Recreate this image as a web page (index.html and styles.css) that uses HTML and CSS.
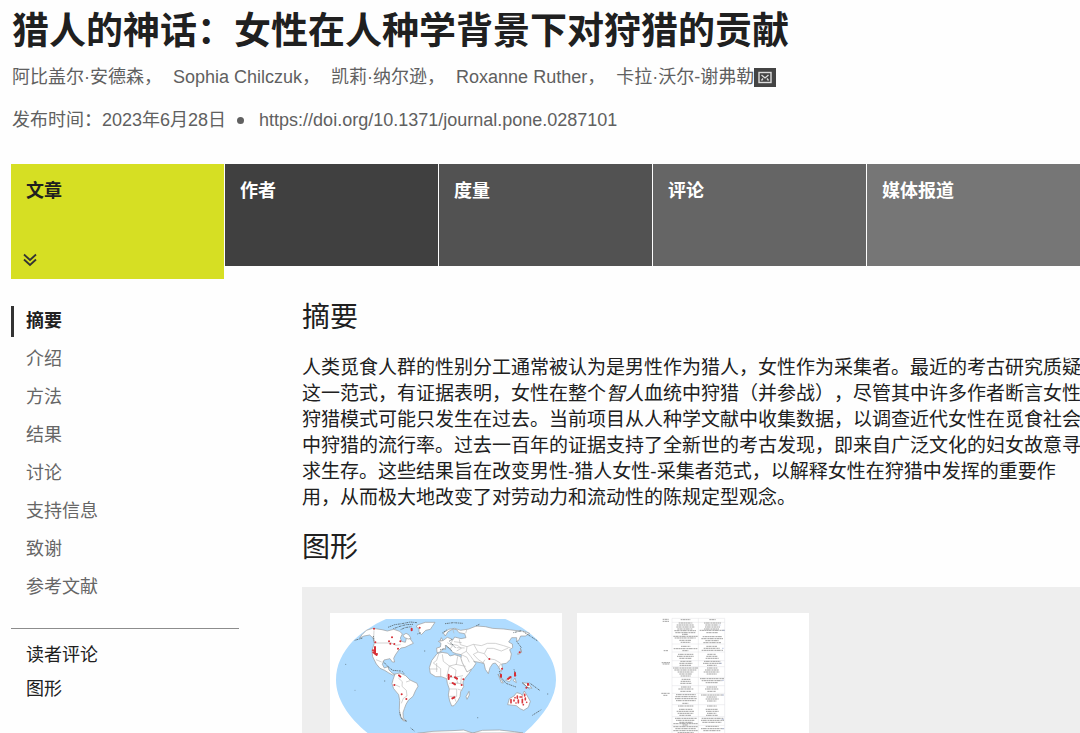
FILE: index.html
```html
<!DOCTYPE html>
<html lang="zh-CN">
<head>
<meta charset="utf-8">
<meta name="viewport" content="width=device-width, initial-scale=1">
<title>猎人的神话：女性在人种学背景下对狩猎的贡献</title>
<link rel="stylesheet" href="styles.css">
</head>
<body>
<header class="article-header">
  <h1 class="article-title">猎人的神话：女性在人种学背景下对狩猎的贡献</h1>
  <ul class="authors">
    <li>阿比盖尔·安德森，</li>
    <li>Sophia Chilczuk，</li>
    <li>凯莉·纳尔逊，</li>
    <li>Roxanne Ruther，</li>
    <li class="corresponding">卡拉·沃尔-谢弗勒<svg class="mail" viewBox="0 0 22 19" aria-hidden="true"><rect width="22" height="19" fill="#444"/><rect x="5" y="4.500" width="12" height="10" fill="none" stroke="#ddd" stroke-width="1.400"/><path d="M7.500 7 11 10 14.500 7M7.500 12.500 9 10.500M14.500 12.500 13 10.500" fill="none" stroke="#ddd" stroke-width="1.300"/></svg></li>
  </ul>
  <p class="published"><span>发布时间：2023年6月28日</span><span class="dot"></span><a href="#doi">https://doi.org/10.1371/journal.pone.0287101</a></p>
</header>

<nav class="tabs">
  <a class="tab tab-active" href="#article">文章
    <svg class="chevrons" viewBox="0 0 14 14" aria-hidden="true"><path d="M1 1.500 7 7 13 1.500M1 6.500 7 12 13 6.500" fill="none" stroke="#333" stroke-width="1.800"/></svg>
  </a>
  <a class="tab tab-authors" href="#authors">作者</a>
  <a class="tab tab-metrics" href="#metrics">度量</a>
  <a class="tab tab-comments" href="#comments">评论</a>
  <a class="tab tab-media" href="#media">媒体报道</a>
</nav>

<div class="layout">
  <aside class="sidebar">
    <nav class="sections">
      <a class="current" href="#abstract">摘要</a>
      <a href="#intro">介绍</a>
      <a href="#methods">方法</a>
      <a href="#results">结果</a>
      <a href="#discussion">讨论</a>
      <a href="#supporting">支持信息</a>
      <a href="#thanks">致谢</a>
      <a href="#references">参考文献</a>
    </nav>
    <nav class="extras">
      <a href="#reader-comments">读者评论</a>
      <a href="#figures">图形</a>
    </nav>
  </aside>

  <main class="content">
    <h2 id="abstract">摘要</h2>
    <p class="abstract">人类觅食人群的性别分工通常被认为是男性作为猎人，女性作为采集者。最近的考古研究质疑这一范式，有证据表明，女性在整个<em>智人</em>血统中狩猎（并参战），尽管其中许多作者断言女性狩猎模式可能只发生在过去。当前项目从人种学文献中收集数据，以调查近代女性在觅食社会中狩猎的流行率。过去一百年的证据支持了全新世的考古发现，即来自广泛文化的妇女故意寻求生存。这些结果旨在改变男性-猎人女性-采集者范式，以解释女性在狩猎中发挥的重要作用，从而极大地改变了对劳动力和流动性的陈规定型观念。</p>
    <h2 id="figures">图形</h2>
    <div class="figures">
      <a class="figure" href="#fig1">
        <svg viewBox="90 99 696 360" role="img" aria-label="世界地图">
          <path fill="#b0dcff" d="M258 117H616C655 134 700 160 730 200C756 233 768 264 768 300C768 350 735 405 672 460H204C145 412 108 357 108 300C108 255 127 218 158 184C185 157 220 134 258 117Z"/>
          <g fill="#fff" stroke="#999" stroke-width="2" stroke-linejoin="round">
            <path d="M186 164 199 151 218 145 246 149 262 153 281 148 299 154 307 162 301 174 305 184 316 187 320 172 331 177 340 190 325 197 315 202 303 204 294 213 286 225 281 235 284 246 277 246 270 236 252 240 247 253 253 264 264 260 267 270 276 279 285 283 278 285 265 278 254 271 240 265 229 252 218 230 216 211 223 190 219 174 209 165 192 168 179 174Z"/>
            <path d="M352 135 376 127 405 127 397 139 391 148 377 151 364 164 357 156 357 146 349 141Z"/>
            <path d="M309 166 318 160 326 164 333 175 325 177 314 173Z"/>
            <path d="M285 282 300 279 317 287 330 300 351 310 354 319 346 333 339 349 325 361 318 373 313 386 309 398 310 414 319 423 309 422 301 409 298 389 299 361 296 344 281 326 276 311 279 299Z"/>
            <path d="M411 221 426 217 443 220 450 228 464 224 480 229 489 239 493 252 502 267 514 269 507 280 495 295 489 306 491 320 482 335 480 350 473 363 462 377 455 378 449 363 445 345 448 327 442 310 440 296 424 290 407 290 391 280 388 263 395 242Z"/>
            <path d="M411 218 410 204 421 201 423 190 415 184 430 181 442 172 459 179 464 171 483 176 498 173 494 161 477 158 470 149 459 147 444 155 436 168 430 159 446 148 464 145 482 151 506 147 529 138 556 140 577 145 611 147 642 151 673 154 689 160 676 168 662 168 656 181 650 184 650 173 635 173 626 186 637 192 638 203 629 209 634 222 631 238 619 250 605 252 608 265 603 275 596 261 586 249 578 251 570 263 565 281 556 268 552 250 542 248 527 245 521 244 528 250 518 265 501 276 487 248 483 236 484 224 469 221 458 217 452 208 446 203 436 196 437 208 431 206 426 212 417 217Z"/>
            <path d="M623 374 628 356 642 348 650 338 662 341 667 347 673 333 682 348 691 364 685 382 671 391 660 386 649 377Z"/>
            <path d="M507 334 508 345 501 358 498 350ZM420 182 424 173 429 182ZM617 301 629 288 634 297 628 305ZM640 302 645 294 649 308ZM667 308 684 310 696 325 683 322ZM652 222 664 215 661 204 665 217 656 223ZM594 282 610 309 604 308Z"/>
            <path d="M352 460 399 454 456 452 491 450 518 459 547 451 598 450 643 455 669 459Z"/>
          </g>
          <g fill="none" stroke="#b5b5b5" stroke-width="1.800">
            <path d="M222 151 221 178M224 189H275L287 196 302 194M228 239 245 246M295 294 307 305 306 319 319 331 321 348 310 355 304 370M283 313 300 321M330 302 318 306"/>
            <path d="M416 222 410 241 400 249M427 223 430 244 448 258 469 253 473 229M400 249 422 266 422 289M410 249V276M448 258 440 290M448 258 468 270 466 291 489 287M467 253 497 259M443 293 466 291 474 309 447 310M449 327H470V349H448M470 309 490 313M473 327 487 332M390 267H413M462 349 468 365M484 292 482 312"/>
            <path d="M459 179 451 192 472 196 484 205 470 213M442 188 458 197 450 207M478 178 481 194 501 200 499 214 484 222M501 200 520 193 544 197 562 190 586 190 611 197 632 204M521 193 534 216 553 221 565 236 584 239 601 249M534 216 520 223 535 239 552 250M553 221 561 205 580 205 604 213 625 204M499 214 512 229 523 244M501 147 497 160M603 250 594 266M547 251 555 239M458 147 462 160M484 224 501 232 508 247M462 185 485 188M470 203 494 204"/>
          </g>
          <g fill="none" stroke="#59666c" stroke-width="2.500" stroke-dasharray="3 2 6 2">
            <path d="M264 142 284 134 306 131 331 126 351 128M280 146 300 139 318 134 339 133M302 149 315 143 334 140M435 131 460 128 489 130M528 138 540 132M220 168 223 187M250 245 263 259 278 271 302 273M299 397 304 415 320 424M352 162 363 158M427 159 441 149M420 210 433 206M438 196 454 212M452 188 466 203M598 273 604 293 618 310 648 321M642 268 648 287M666 308 688 327M164 181 188 174M650 184 664 203M689 309 719 331M640 158 665 152M697 406 724 389M447 184 457 178M307 274 312 281M670 155 713 183M332 444 343 453"/>
          </g>
          <g fill="none" stroke="#d62e35" stroke-width="6" stroke-linecap="round">
            <path d="M222 146h.1M335 146v5M359 143h.1M276 172h.1M267 184h.1M271 191h.1M283 192h.1M301 184h.1M294 206h.1M226 187h.1M225 201v20M219 211h.1M231 222h.1M220 217 230 225M297 286 301 290M283 315h.1M305 343h.1M319 357h.1M446 284V297M453 289h.1M465 292 471 296M490 298h.1M485 315h.1M458 309 465 313M457 355 463 352M568 237h.1M659 217h.1M606 266h.1M603 284v6M624 297 632 291M645 279v8M684 311v4M679 323h.1"/>
          </g>
          <g fill="none" stroke="#d83b40" stroke-width="5" stroke-linecap="round">
            <path d="M633 359v9M642 360v3M648 369h.1M652 348v7M660 351h6M655 360v8M667 358v10M674 343v5M676 354v5M680 367h.1M670 374h.1M645 353h.1"/>
          </g>
          <g fill="#7997aa"><circle cx="137" cy="253" r="2"/><circle cx="254" cy="303" r="2"/><circle cx="533" cy="413" r="2"/><circle cx="743" cy="342" r="2"/><circle cx="374" cy="213" r="2"/><circle cx="165" cy="331" r="1.500"/></g>
        </svg>
      </a>
      <a class="figure" href="#fig2">
        <svg viewBox="21 99 696 360" role="img" aria-label="数据表">
          <g fill="none" stroke="#e1e1e5" stroke-width="1.500"><path d="M306 115V460M385 115V460M464 115V460M306 115H464M306 127H464M306 192H464M306 216H464M306 242H464M306 260H464M306 292H464M306 317H464M306 340H464M306 374H464M306 410H464M306 436H464"/></g>
          <g fill="none" stroke="#a5a5a5" stroke-width="3" stroke-dasharray="5 1 9 1 3 1">
            <path d="M278 118H296M278 124H298M281 212H294M275 248H300M278 252H299M274 340H300M280 346H292"/>
            <path d="M332 119H361M326 129H367M320 135H371M319 141H373M322 147H367M313 152H378M316 158H377M336 163H354M310 169H383M314 174H377M328 181H364M332 187H361M333 199H361M311 206H382M337 212H355M324 223H371M321 229H371M328 235H365M331 244H364M328 250H367M329 256H363M309 264H384M313 270H380M323 276H370M328 282H366M332 288H362M335 298H362M332 304H362M331 310H364M333 321H363M325 327H371M331 334H363M318 344H377M316 350H379M315 356H380M318 362H377M337 370H355M324 378H371M327 388H368M320 394H372M323 400H370M328 406H364M315 415H380M318 421H373M328 427H369M310 431H383M338 435H353M310 440H383M316 446H378M310 452H383M323 458H371"/>
            <path d="M418 119H437M402 129H453M406 135H445M405 141H450M402 147H447M389 151H465M409 158H443M398 170H456M394 176H459M406 182H447M400 188H453M409 199H441M401 205H449M395 211H459M412 223H438M409 229H442M407 235H447M402 244H451M399 250H455M411 256H440M411 264H442M405 270H447M401 276H448M410 282H440M390 296H462M395 302H457M407 308H444M410 321H441M405 327H446M412 334H438M393 345H460M410 351H440M407 357H446M411 363H439M411 378H440M407 388H444M408 394H446M411 400H439M408 406H443M395 415H461M393 421H462M397 427H454M407 439H447M393 446H461M400 452H451"/>
          </g>
          <path fill="none" stroke="#a9b5d8" stroke-width="2" d="M447 135h5M457 151h7M456 205h5M448 250h7M455 301h7M456 345h6M455 418h7M456 446h7"/>
        </svg>
      </a>
    </div>
  </main>
</div>
</body>
</html>
```

FILE: styles.css
```css
* {
  box-sizing: border-box;
}

body {
  margin: 0;
  overflow-x: hidden;
  background: #fefefe;
  color: #202020;
  font-family: "Liberation Sans", "Noto Sans CJK SC", sans-serif;
  font-size: 18px;
  text-spacing-trim: space-all;
}

a {
  color: inherit;
  text-decoration: none;
}

h1,
h2,
p,
ul {
  margin: 0;
  padding: 0;
}

.article-header {
  padding: 8px 12px 0;
  color: #606060;
}

.article-title {
  color: #202020;
  font-size: 37px;
  line-height: 48px;
}

.authors {
  display: flex;
  flex-wrap: wrap;
  gap: 11px;
  margin-top: 9px;
  line-height: 24px;
  list-style: none;
}

.corresponding {
  display: flex;
  align-items: center;
}

.mail {
  width: 22px;
  height: 19px;
}

.published {
  display: flex;
  align-items: center;
  margin-top: 19px;
  line-height: 24px;
}

.dot {
  width: 7px;
  height: 7px;
  margin: 0 15px 0 11px;
  border-radius: 50%;
  background: #606060;
}

.tabs {
  display: grid;
  grid-template-columns: repeat(5, 1fr);
  align-items: start;
  gap: 1px;
  margin: 32px 0 0 11px;
}

.tab {
  display: flex;
  flex-direction: column;
  justify-content: space-between;
  min-height: 102px;
  padding: 15px 15px 12px;
  color: #fff;
  font-weight: 700;
  line-height: 24px;
}

.tab-active {
  min-height: 115px;
  background: #d6df23;
  color: #202020;
}

.chevrons {
  width: 14px;
  height: 14px;
  margin-left: -3px;
}

.tab-authors {
  background: #404040;
}

.tab-metrics {
  background: #525252;
}

.tab-comments {
  background: #656565;
}

.tab-media {
  background: #767676;
}

.layout {
  display: grid;
  grid-template-columns: 228px 1fr;
  gap: 63px;
  padding-left: 11px;
}

.sections {
  display: grid;
  gap: 7px;
  padding: 27px 0 25px;
  border-bottom: 1px solid #8c8c8c;
  color: #666;
  line-height: 31px;
}

.sections a {
  padding-left: 12px;
  border-left: 3px solid transparent;
}

.sections .current {
  border-left-color: #333;
  color: #202020;
  font-weight: 700;
}

.extras {
  display: grid;
  padding: 9px 0 0 15px;
  line-height: 34px;
}

.content {
  padding-top: 21px;
}

.content h2 {
  font-size: 28px;
  font-weight: 400;
  line-height: 36px;
}

.abstract {
  margin: 19px -6px 19px 0;
  font-size: 19px;
  line-height: 26px;
}

.figures {
  display: flex;
  gap: 15px;
  margin-top: 21px;
  padding: 26px 28px 0;
  background: #eee;
}

.figure {
  flex: 0 1 232px;
  background: #fff;
}

.figure svg {
  display: block;
  width: 100%;
}
```
